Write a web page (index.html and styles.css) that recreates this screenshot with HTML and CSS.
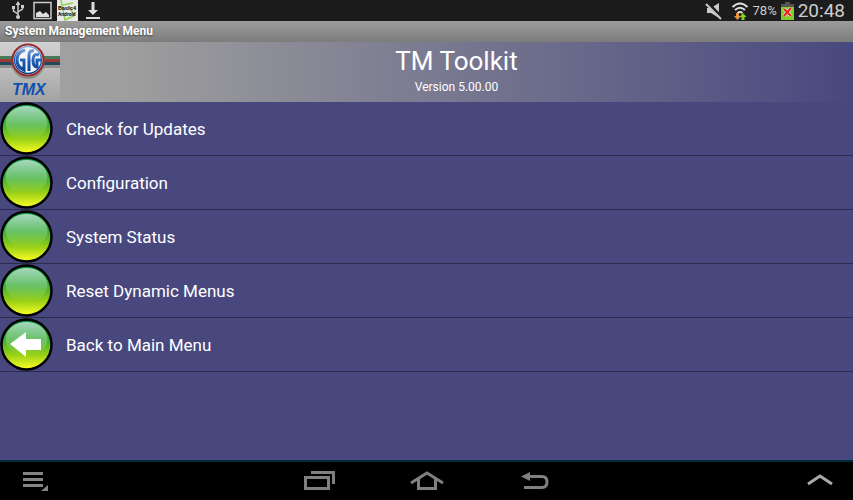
FILE: index.html
```html
<!DOCTYPE html>
<html lang="en">
<head>
<meta charset="utf-8">
<meta name="viewport" content="width=device-width, initial-scale=1">
<title>System Management Menu</title>
<link rel="stylesheet" href="styles.css">
</head>
<body>
<div class="status">
  <div class="status-group notices">
    <svg width="14" height="20" viewBox="0 0 14 20" fill="none" stroke="#ccc" stroke-width="1.5"><path d="M7 4v13M7 14L2.500 11V8M7 12l4.500-3V6"/><path d="M7 1l2.500 4h-5z" fill="#ccc" stroke="none"/><circle cx="7" cy="17" r="2" fill="#ccc" stroke="none"/><path d="M1 6h3v3H1zM10 5h3v3h-3z" fill="#ccc" stroke="none"/></svg>
    <svg width="19" height="20" viewBox="0 0 19 20"><path d="M1 2.500h17v16H1z" fill="none" stroke="#ccc" stroke-width="1.500"/><path d="M3 17v-4l4-2 3 3 3-2 3 3v2z" fill="#ddd"/></svg>
    <span class="basic"><svg width="21" height="21" viewBox="0 0 21 21"><path d="M0 0h21v21H0z" fill="#e8eae5"/><path d="M4 0l4 20 9-4M6 5l10-2M12 6l5 9" fill="none" stroke="#8fd053" stroke-width="1.500"/></svg><span class="basic-text"><span class="basic-name">Basic4</span><span>Android</span></span></span>
    <svg width="14" height="20" viewBox="0 0 14 20" fill="#ddd"><path d="M5.500 2h3v8H12l-5 5-5-5h3.500zM0 17h14v2H0z"/></svg>
  </div>
  <div class="status-group readings">
    <svg width="18" height="20" viewBox="0 0 18 20"><path d="M2 7h4l8-5v15l-8-5H2z" fill="#ccc"/><path d="M2 2l15 15" stroke="#1c1c1c" stroke-width="4"/><path d="M1 3l15 15" stroke="#ccc" stroke-width="2"/></svg>
    <svg width="18" height="20" viewBox="0 0 18 20"><g fill="none" stroke="#ddd" stroke-width="2"><path d="M1.500 6q7.500-7 15 0M4 9q5-4.500 10 0M6.500 12q2.500-2 5 0"/></g><path d="M5 12h3v3h2l-3.500 4L3 15h2z" fill="#f0913a"/><path d="M10.500 19v-3h-2l3.500-4 3.500 4h-2v3z" fill="#80d51c"/></svg>
    <span class="percent">78%</span>
    <svg width="13" height="20" viewBox="0 0 13 20"><path d="M4 1h5v2h4v5H0V3h4z" fill="#555"/><path d="M0 6h13v13H0z" fill="#80cc29"/><path d="M3 8l7 7M10 7l-7 8" stroke="#ddd" stroke-width="3.500"/><path d="M3 8l7 7M10 7l-7 8" stroke="#e5281c" stroke-width="2"/></svg>
    <time class="clock">20:48</time>
  </div>
</div>
<h1 class="titlebar">System Management Menu</h1>
<header class="banner">
  <svg class="logo" width="60" height="60" viewBox="0 0 60 60" role="img" aria-label="GFG TMX">
    <defs>
      <linearGradient id="silver" x1="0" y1="0" x2="0" y2="1"><stop offset="0" stop-color="#d2d2d2"/><stop offset=".6" stop-color="#b5b5b5"/><stop offset="1" stop-color="#a2a2a2"/></linearGradient>
      <linearGradient id="blue" gradientUnits="userSpaceOnUse" x1="0" y1="5" x2="0" y2="33"><stop offset="0" stop-color="#8ba9dd"/><stop offset=".5" stop-color="#1c5eb6"/><stop offset="1" stop-color="#063784"/></linearGradient>
    </defs>
    <path d="M0 0h60v60H0z" fill="url(#silver)"/>
    <path d="M0 23h60v3H0z" fill="#909090"/>
    <path d="M0 14h60v3H0z" fill="#4a7a5c"/><path d="M0 17h60v3H0z" fill="#9a3a34"/><path d="M0 20h60v3H0z" fill="#204b5c"/>
    <circle cx="28" cy="20" r="17" fill="#666" opacity=".5"/>
    <circle cx="28" cy="18" r="15.500" fill="#f4f6fa" stroke="#982c24" stroke-width="2"/>
    <circle cx="28" cy="18" r="13.500" fill="none" stroke="url(#blue)" stroke-width="1.500"/>
    <g fill="none" stroke="url(#blue)" stroke-width="3"><path d="M25 8q-8 2-8 10 0 7 7 10V18h-4M29 29V13q0-5 5-4M39 13q-6-2-6 5 0 7 4 7V18h5"/></g>
    <text x="12" y="53" class="tmx">TMX</text>
  </svg>
  <div class="heading">
    <h2>TM Toolkit</h2>
    <p>Version 5.00.00</p>
  </div>
</header>
<main>
  <svg class="defs" width="0" height="0" aria-hidden="true">
    <defs>
      <linearGradient id="green" x1="0" y1="0" x2="0" y2="1"><stop offset="0" stop-color="#008f43"/><stop offset=".4" stop-color="#36ad30"/><stop offset=".7" stop-color="#96cf16"/><stop offset="1" stop-color="#ffff24"/></linearGradient>
      <linearGradient id="shine" x1="0" y1="0" x2="0" y2="1"><stop offset="0" stop-color="#fff" stop-opacity=".65"/><stop offset=".6" stop-color="#fff" stop-opacity=".2"/><stop offset="1" stop-color="#fff" stop-opacity="0"/></linearGradient>
      <symbol id="ball" viewBox="0 0 53 53"><circle cx="26.500" cy="26.500" r="25" fill="url(#green)" stroke="#000" stroke-width="2.500"/><ellipse cx="26.500" cy="21" rx="21" ry="17" fill="url(#shine)"/></symbol>
    </defs>
  </svg>
  <ul class="menu">
    <li><button type="button"><svg width="53" height="53"><use href="#ball"/></svg><span>Check for Updates</span></button></li>
    <li><button type="button"><svg width="53" height="53"><use href="#ball"/></svg><span>Configuration</span></button></li>
    <li><button type="button"><svg width="53" height="53"><use href="#ball"/></svg><span>System Status</span></button></li>
    <li><button type="button"><svg width="53" height="53"><use href="#ball"/></svg><span>Reset Dynamic Menus</span></button></li>
    <li><button type="button"><svg width="53" height="53"><use href="#ball"/><path d="M10 26l16-12v7h15v11H26v7z" fill="#fff"/></svg><span>Back to Main Menu</span></button></li>
  </ul>
</main>
<nav class="navbar" aria-label="System">
  <button type="button" aria-label="Menu"><svg width="26" height="22" viewBox="0 0 26 22" fill="#858585"><path d="M0 2h20v3H0zM0 8h20v3H0zM0 14h20v3H0zM25 15v6h-7z"/></svg></button>
  <div class="nav-main">
    <button type="button" aria-label="Recent apps"><svg width="36" height="22" viewBox="0 0 36 22" fill="none" stroke="#808080" stroke-width="3"><path d="M3.500 7.500h23v11h-23zM9 2.500h22.500V14" /></svg></button>
    <button type="button" aria-label="Home"><svg width="36" height="22" viewBox="0 0 36 22" fill="none" stroke="#808080" stroke-width="3"><path d="M1 13L17 3l16 10M8.500 9v9.500h17V9"/></svg></button>
    <button type="button" aria-label="Back"><svg width="36" height="22" viewBox="0 0 36 22" fill="none" stroke="#808080" stroke-width="3"><path d="M10 6.500h14q5 0 5 5.500T24 17.500H6"/><path d="M3 6.500L12 2v9z" fill="#808080" stroke="none"/></svg></button>
  </div>
  <button type="button" aria-label="Expand"><svg width="26" height="22" viewBox="0 0 26 22" fill="none" stroke="#aaa" stroke-width="3"><path d="M1 14l12-8 12 8"/></svg></button>
</nav>
</body>
</html>
```
FILE: styles.css
```css
* { box-sizing: border-box; }

body {
  margin: 0;
  min-height: 100vh;
  display: flex;
  flex-direction: column;
  background: #48487f;
  color: #fff;
  font-family: Roboto, sans-serif;
}

h1, h2, p, ul { margin: 0; padding: 0; }
svg { display: block; flex: none; }

button {
  border: 0;
  padding: 0;
  background: none;
  color: inherit;
  font: inherit;
}

.status {
  display: flex;
  justify-content: space-between;
  height: 21px;
  background: #1c1c1c;
  color: #ccc;
}

.status-group { display: flex; }
.notices { gap: 8px; padding-left: 11px; }
.readings { gap: 4px; padding-right: 8px; align-items: center; }
.readings svg:first-child { margin-right: 4px; }
.basic { position: relative; margin-left: -3px; }

.basic-text {
  position: absolute;
  top: 4px;
  left: 1px;
  display: grid;
  color: #111;
  font-size: 5px;
  font-weight: 700;
  line-height: 7px;
}

.basic-name { font-size: 6px; }
.percent { font-size: 13px; }
.clock { font-size: 19px; line-height: 21px; }

.titlebar {
  height: 21px;
  padding-left: 5px;
  background: linear-gradient(#9c9c9c, #7c7c7c);
  font-size: 12px;
  font-weight: 700;
  line-height: 20px;
  text-shadow: 0 1px 2px #444;
}

.banner {
  display: flex;
  height: 60px;
  background: linear-gradient(to right, #a2a2a2, #9e9e9e 15%, #48487f);
}

.tmx {
  fill: #0d50ae;
  font: italic 700 16px "Liberation Sans", sans-serif;
}

.heading { flex: 1; text-align: center; }
.heading h2 { font-size: 26px; font-weight: 400; line-height: 38px; }
.heading p { font-size: 12px; line-height: 14px; }

main { flex: 1; }
.defs { position: absolute; }
.menu { list-style: none; }
.menu li { height: 54px; border-bottom: 1px solid #2b2b4d; }

.menu button {
  display: flex;
  align-items: center;
  gap: 13px;
  width: 100%;
  height: 53px;
  font-size: 17px;
  text-align: left;
}

.navbar {
  display: flex;
  align-items: center;
  justify-content: space-between;
  height: 40px;
  padding: 0 20px 0 23px;
  border-top: 2px solid #032c3b;
  background: #000;
}

.nav-main { display: flex; gap: 72px; }
```
